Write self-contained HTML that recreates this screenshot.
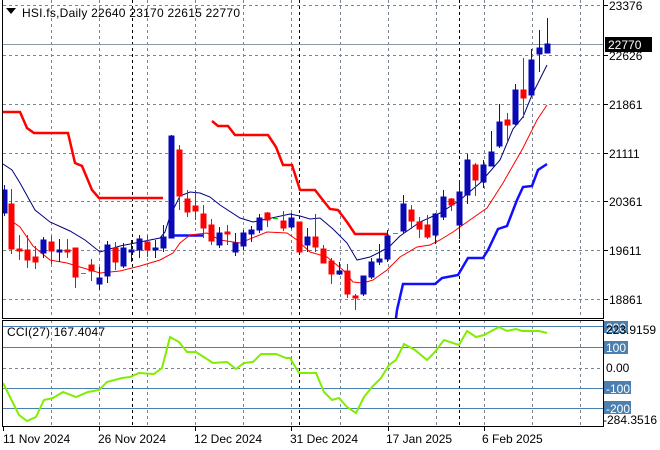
<!DOCTYPE html>
<html><head><meta charset="utf-8"><style>
html,body{margin:0;padding:0;background:#fff;width:660px;height:450px;overflow:hidden}
svg{display:block}
text{font-family:"Liberation Sans",Tahoma,sans-serif;font-size:12px;fill:#000}
</style></head><body>
<svg width="660" height="450" viewBox="0 0 660 450" xmlns="http://www.w3.org/2000/svg">
<g stroke="#7a8593" stroke-width="1" stroke-dasharray="3,3" fill="none">
<path d="M3 5.5H603M3 55.5H603M3 104.5H603M3 153.5H603M3 201.5H603M3 250.5H603M3 299.5H603"/>
<path d="M51.5 0V318M99.5 0V318M147.5 0V318M195.5 0V318M243.5 0V318M291.5 0V318M340.5 0V318M388.5 0V318M436.5 0V318M484.5 0V318M532.5 0V318M580.5 0V318"/>
<path d="M51.5 320V426M99.5 320V426M147.5 320V426M195.5 320V426M243.5 320V426M291.5 320V426M340.5 320V426M388.5 320V426M436.5 320V426M484.5 320V426M532.5 320V426M580.5 320V426M3 368.5H603"/>
</g>
<g stroke="#000" stroke-width="1" stroke-dasharray="3,3" fill="none">
<path d="M132.5 0V318M299.5 0V318M459.5 0V318M132.5 320V426M299.5 320V426M459.5 320V426"/>
</g>
<path d="M3 44.5H603" stroke="#8a96a3" stroke-width="1"/>
<polyline fill="none" stroke="#ff0000" stroke-width="2.5" points="3,112 20,112 27,128 34,133 68,133 75,163 82,166 92,190 99,198 163,198"/>
<polyline fill="none" stroke="#ff0000" stroke-width="2.5" points="212,121 218,126 228,126 235,135 258,135 268,135 276,147 283,165 292,165 300,190 315,190 322,199 330,209 338,210 347,222 355,234 387,234"/>
<polyline fill="none" stroke="#1010ff" stroke-width="2.5" points="396,318 397,310 403,284 435,284 442,278 458,275 468,258 483,258 488,250 498,229 507,226 517,200 523,187 532,186 538,170 547,164"/>
<path d="M172 235.5H204" stroke="#1010ff" stroke-width="2.5"/>
<polyline fill="none" stroke="#000080" stroke-width="1" points="3,164 12,170 20,183 35,210 50,222 70,231 85,240 100,252 120,246 140,242 160,238 165,232 170,216 180,196 190,192 200,193 210,197 220,205 240,218 253,222 267,219 290,214 300,216 310,219 320,218 333,229 347,243 357,260 370,257 380,252 390,246 400,236 420,222 440,213 460,200 480,183 500,160 513,129 523,117 532,95 547,65"/>
<polyline fill="none" stroke="#ff0000" stroke-width="1" points="10,220 20,227 33,246 50,260 67,263 80,267 100,273 120,271 140,266 160,260 173,253 180,243 190,235 207,233 220,240 240,243 267,232 287,233 297,240 310,252 327,257 343,270 353,282 363,283 373,280 387,270 400,257 417,247 430,245 440,240 453,232 467,222 487,208 503,183 523,148 537,120 547,105"/>
<g stroke-width="1">
<g stroke="#ff0000" fill="#ff0000">
<path d="M11.5 189V254M19.5 235V260M27.5 235V268M35.5 246V269M51.5 236V264M67.5 239V258M75.5 248V288M91.5 259V281M115.5 242V270M147.5 235V257M179.5 145V210M187.5 190V217M195.5 190V220M203.5 205V238M211.5 219V245M227.5 225V245M267.5 212V227M283.5 211V231M299.5 222V252M315.5 214V252M323.5 245V263M331.5 258V284M347.5 264V298M355.5 294V310M411.5 205V229M419.5 217V238M427.5 215V239M451.5 198V211M475.5 163V196M507.5 113V141M523.5 58V118"/>
<rect x="9" y="204" width="5" height="45"/><rect x="17" y="249" width="5" height="2"/><rect x="25" y="250" width="5" height="10"/><rect x="33" y="257" width="5" height="5"/><rect x="49" y="242" width="5" height="9"/><rect x="65" y="250" width="5" height="2"/><rect x="73" y="248" width="5" height="29"/><rect x="89" y="265" width="5" height="6"/><rect x="113" y="248" width="5" height="14"/><rect x="145" y="242" width="5" height="8"/><rect x="177" y="150" width="5" height="46"/><rect x="185" y="199" width="5" height="13"/><rect x="193" y="206" width="5" height="5"/><rect x="201" y="214" width="5" height="14"/><rect x="209" y="225" width="5" height="16"/><rect x="225" y="232" width="5" height="2"/><rect x="265" y="213" width="5" height="7"/><rect x="281" y="221" width="5" height="7"/><rect x="297" y="222" width="5" height="30"/><rect x="313" y="237" width="5" height="10"/><rect x="321" y="249" width="5" height="14"/><rect x="329" y="261" width="5" height="13"/><rect x="345" y="271" width="5" height="23"/><rect x="353" y="296" width="5" height="2"/><rect x="409" y="210" width="5" height="11"/><rect x="417" y="222" width="5" height="7"/><rect x="425" y="225" width="5" height="12"/><rect x="449" y="199" width="5" height="6"/><rect x="473" y="165" width="5" height="15"/><rect x="505" y="120" width="5" height="5"/><rect x="521" y="90" width="5" height="8"/>
</g>
<g stroke="#0a0ab4" fill="#0a0ab4">
<path d="M4.5 185V216M43.5 237V258M59.5 239V262M99.5 267V290M107.5 241V283M123.5 243V268M131.5 240V262M139.5 235V258M155.5 240V258M163.5 225V252M171.5 135V238M219.5 227V248M235.5 233V256M243.5 230V250M251.5 226V242M259.5 214V233M291.5 213V229M307.5 228V252M339.5 262V275M363.5 276V296M371.5 258V279M379.5 244V265M387.5 230V262M403.5 195V233M435.5 213V244M443.5 190V220M459.5 180V239M467.5 154V204M483.5 160V188M491.5 131V166M499.5 104V148M515.5 84V125M531.5 49V96M539.5 30V72M547.5 18V53"/>
<rect x="3" y="190" width="4" height="23"/><rect x="41" y="240" width="5" height="13"/><rect x="57" y="250" width="5" height="2"/><rect x="97" y="278" width="5" height="6"/><rect x="105" y="245" width="5" height="31"/><rect x="121" y="248" width="5" height="18"/><rect x="129" y="250" width="5" height="2"/><rect x="137" y="239" width="5" height="11"/><rect x="153" y="248" width="5" height="2"/><rect x="161" y="237" width="5" height="11"/><rect x="169" y="136" width="5" height="102"/><rect x="217" y="233" width="5" height="12"/><rect x="233" y="243" width="5" height="9"/><rect x="241" y="233" width="5" height="13"/><rect x="249" y="230" width="5" height="4"/><rect x="257" y="218" width="5" height="12"/><rect x="289" y="218" width="5" height="9"/><rect x="305" y="237" width="5" height="8"/><rect x="337" y="271" width="5" height="3"/><rect x="361" y="276" width="5" height="18"/><rect x="369" y="262" width="5" height="15"/><rect x="377" y="259" width="5" height="3"/><rect x="385" y="236" width="5" height="23"/><rect x="401" y="204" width="5" height="27"/><rect x="433" y="214" width="5" height="21"/><rect x="441" y="197" width="5" height="20"/><rect x="457" y="192" width="5" height="33"/><rect x="465" y="160" width="5" height="35"/><rect x="481" y="165" width="5" height="17"/><rect x="489" y="152" width="5" height="14"/><rect x="497" y="122" width="5" height="24"/><rect x="513" y="90" width="5" height="34"/><rect x="529" y="60" width="5" height="35"/><rect x="537" y="48" width="5" height="6"/><rect x="545" y="44" width="5" height="9"/>
</g>
<path d="M81 273.5H86M273 218.5H278M393 233.5H398" stroke="#00d000"/>
</g>
<path d="M3 326.5H603M3 347.5H603M3 388.5H603M3 408.5H603" stroke="#4a7fb0" stroke-width="1"/>
<polyline fill="none" stroke="#80ee00" stroke-width="2" points="3,383 19,415 27,421 36,417 44,400 53,398 63,392 76,397 88,392 99,390 107,382 122,378 130,377 139,373 154,374 162,368 170,337 179,342 187,352 196,352 213,363 227,362 236,369 244,363 253,362 261,354 276,354 286,358 290,358 299,373 316,373 324,392 332,400 339,398 347,407 356,413 364,397 372,387 381,378 389,365 396,360 404,344 415,350 427,360 434,353 444,340 459,345 467,331 476,337 484,335 499,327 507,331 516,329 522,331 539,331 547,333"/>
<path d="M2.5 0V318.5H603.5V0M2.5 320.5H603.5V426.5H2.5Z" fill="none" stroke="#000" stroke-width="1"/>
<path d="M603.5 5.5H608M603.5 55.5H608M603.5 104.5H608M603.5 153.5H608M603.5 201.5H608M603.5 250.5H608M603.5 299.5H608" stroke="#000"/>
<path d="M6 8H16L11 14Z" fill="#000"/>
<text x="22" y="17" textLength="218" lengthAdjust="spacing">HSI.fs,Daily  22640 23170 22615 22770</text>
<text x="7" y="336" textLength="98" lengthAdjust="spacing">CCI(27) 167.4047</text>
<text x="609" y="10">23376</text>
<text x="609" y="60">22626</text>
<text x="609" y="109">21861</text>
<text x="609" y="158">21111</text>
<text x="609" y="206">20361</text>
<text x="609" y="255">19611</text>
<text x="609" y="304">18861</text>
<rect x="605" y="37" width="47" height="15" fill="#000"/>
<text x="608" y="49" style="fill:#fff">22770</text>
<rect x="604" y="321" width="24" height="12" fill="#4a7fb0"/>
<text x="606" y="332" style="fill:#fff">200</text>
<text x="606" y="334">223.9159</text>
<rect x="604" y="341" width="24" height="13" fill="#4a7fb0"/>
<text x="606" y="352" style="fill:#fff">100</text>
<text x="606" y="372">0.00</text>
<rect x="604" y="381" width="27" height="13" fill="#4a7fb0"/>
<text x="606" y="393" style="fill:#fff">-100</text>
<rect x="604" y="401" width="27" height="13" fill="#4a7fb0"/>
<text x="606" y="413" style="fill:#fff">-200</text>
<text x="603" y="424">-284.3516</text>
<g>
<path d="M3.5 427V431M99.5 427V431M195.5 427V431M291.5 427V431M388.5 427V431M484.5 427V431" stroke="#000"/>
<text x="3" y="443">11 Nov 2024</text>
<text x="98" y="443">26 Nov 2024</text>
<text x="194" y="443">12 Dec 2024</text>
<text x="290" y="443">31 Dec 2024</text>
<text x="386" y="443">17 Jan 2025</text>
<text x="482" y="443">6 Feb 2025</text>
</g>
</svg>
</body></html>
